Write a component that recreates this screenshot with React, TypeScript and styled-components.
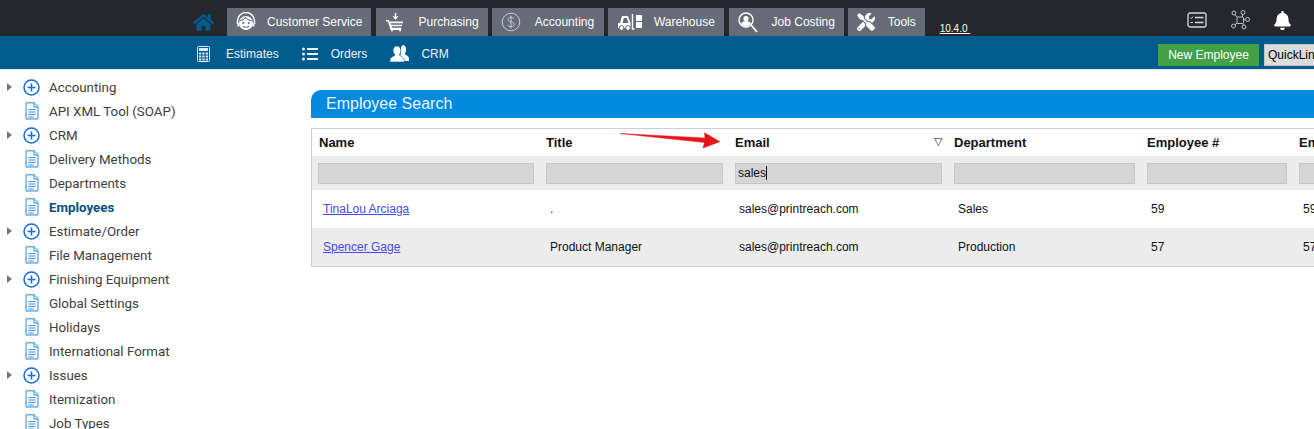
import React from 'react';
import styled, { createGlobalStyle } from 'styled-components';
import { FaHome, FaBell, FaTools, FaListUl } from 'react-icons/fa';

const GlobalStyle = createGlobalStyle`
    html, body {
        margin: 0;
        padding: 0;
        height: 100%;
        overflow: hidden;
        background: #fff;
        font-family: "Liberation Sans", Arial, sans-serif;
    }
`;

const FaceIcon = () => (
    <svg width="20" height="20" viewBox="0 0 20 20" fill="none">
        <path d="M1.500 12V9a8.500 8.500 0 0 1 17 0v3" stroke="#fff" strokeWidth="1.500" />
        <circle cx="10" cy="11" r="7" fill="#fff" />
        <path d="M3.500 9C6 8.500 8 7.500 9.500 5.500c1.500 2 4 3 7 3.500" stroke="#666b78" strokeWidth="1.100" />
        <circle cx="7.200" cy="11" r="1.100" fill="#666b78" />
        <circle cx="12.800" cy="11" r="1.100" fill="#666b78" />
        <path d="M7 14.200c1.600 1.300 4.400 1.300 6 0" stroke="#666b78" strokeWidth="1.200" />
        <path d="M1.500 11.500h1.700v3H1.500ZM16.800 11.500h1.700v3h-1.700Z" fill="#fff" />
    </svg>
);

const CartIcon = () => (
    <svg width="20" height="20" viewBox="0 0 20 20" fill="none">
        <path d="M10.500 1v5M8.300 4.400l2.200 2.400 2.200-2.400" stroke="#fff" strokeWidth="1.400" />
        <path d="M1 8h2.500l1 1.600H18v1.600H5.400l.6 1.600h11v1.400H6.600l.6 1.600h9V18H5.600L3 9.400H1Z" fill="#fff" />
        <circle cx="7" cy="18.600" r="1" fill="#fff" />
        <circle cx="15" cy="18.600" r="1" fill="#fff" />
    </svg>
);

const DollarIcon = () => (
    <svg width="20" height="20" viewBox="0 0 20 20" fill="none" stroke="#c9ccd3" strokeWidth="1">
        <circle cx="10" cy="10" r="8.800" />
        <path d="M13 7c-.6-1.200-1.600-1.700-3-1.700-1.700 0-3 .9-3 2.300 0 3 6.200 1.700 6.200 4.800 0 1.400-1.400 2.300-3.200 2.300-1.500 0-2.700-.6-3.300-1.900M10 3.800v12.400" />
    </svg>
);

const ForkliftIcon = () => (
    <svg width="25" height="17" viewBox="0 0 25 17" fill="none">
        <path d="M1 9h2l2-7h6l2.500 7v5H1Z" fill="#fff" />
        <path d="M5.500 9l1.300-5h3l1.700 5Z" fill="#666b78" />
        <circle cx="4.500" cy="14" r="2.400" fill="#fff" stroke="#666b78" />
        <circle cx="11" cy="14" r="2.400" fill="#fff" stroke="#666b78" />
        <path d="M15.500 0v15h2" stroke="#fff" strokeWidth="1.400" />
        <path d="M19 1h6v6h-6ZM19 8h6v6h-6Z" fill="#fff" />
    </svg>
);

const SearchPersonIcon = () => (
    <svg width="20" height="21" viewBox="0 0 20 21" fill="none">
        <circle cx="8" cy="8" r="7" stroke="#fff" strokeWidth="1.400" />
        <circle cx="8" cy="6.500" r="2.600" fill="#fff" />
        <path d="M3 12c1-2.400 2.800-3 5-3s4 .6 5 3c-1.400 1.600-3 2-5 2s-3.600-.4-5-2Z" fill="#fff" />
        <path d="m13 13 6 7" stroke="#fff" strokeWidth="1.800" />
    </svg>
);

const CalculatorIcon = () => (
    <svg width="13" height="16" viewBox="0 0 13 16" fill="none">
        <rect x=".5" y=".5" width="12" height="15" rx="1" stroke="#dfe9f0" />
        <rect x="2" y="2" width="9" height="3" fill="#dfe9f0" />
        <path d="M2 6.500h2.300v2H2ZM5.300 6.500h2.300v2H5.300ZM8.700 6.500H11v2H8.700ZM2 9.500h2.300v2H2ZM5.300 9.500h2.300v2H5.300ZM8.700 9.500H11v2H8.700ZM2 12.500h2.300v2H2ZM5.300 12.500h2.300v2H5.300ZM8.700 12.500H11v2H8.700Z" fill="#dfe9f0" />
    </svg>
);

const PeopleIcon = () => (
    <svg width="19" height="17" viewBox="0 0 19 17" fill="#fff">
        <path d="M12.500 0c2.300 0 3.600 1.800 3.600 4.200 0 1.800-.5 3.200-1.200 4.200-.2 1.400 4.100 2.300 4.100 5V16h-5.500c-.6-2.400-2.500-3.300-3.700-4.100.6-1.400 1-2.900 1-4.700 0-2.600-.3-4.900 1.700-7.200Z" />
        <path d="M6.800 1c2.500 0 4 1.900 4 4.500 0 1.900-.6 3.300-1.500 4.300.3 1.500 5 2.300 5 4.900V17H0v-2.300c0-2.600 4.700-3.400 5-4.900-1-1-1.900-2.400-1.900-4.300C3.100 2.900 4.400 1 6.800 1Z" stroke="#005b8f" strokeWidth=".6" />
    </svg>
);

const ChecklistIcon = () => (
    <svg width="20" height="16" viewBox="0 0 20 16" fill="none" stroke="#d5d7db">
        <rect x="1" y="1" width="18" height="14" rx="2" strokeWidth="1.300" />
        <path d="M8 5.500h8.500M8 10.500h8.500" strokeWidth="1.300" />
        <path d="M3.500 5.500l1 1 1.500-2M3.500 10.500h2.500" strokeWidth="1" />
    </svg>
);

const NetworkIcon = () => (
    <svg width="20" height="20" viewBox="0 0 20 20" fill="none" stroke="#bfc2c7" strokeWidth="1">
        <rect x="7" y="7" width="6.500" height="6.500" rx="1" />
        <circle cx="4" cy="3" r="2" />
        <circle cx="13" cy="2.500" r="2" />
        <circle cx="17.500" cy="9.500" r="2" />
        <circle cx="14" cy="17" r="2" />
        <circle cx="3.500" cy="16" r="2" />
        <path d="m5 4.700 2.500 2.800M12.800 4.500l-.5 2.500M15.500 9.800h-2M13.600 15l-.8-1.500M5 14.600l2.300-1.500" />
    </svg>
);

const PlusCircle = () => (
    <svg width="17" height="17" viewBox="0 0 17 17" fill="none" stroke="#0f72d8">
        <circle cx="8.500" cy="8.500" r="7.500" strokeWidth="1.500" />
        <path d="M8.500 4.500v8M4.500 8.500h8" strokeWidth="1.600" />
    </svg>
);

const DocIcon = () => (
    <svg width="14" height="18" viewBox="0 0 14 18" fill="none" stroke="#2a8be0">
        <path d="M1 .8h8.200L13 4.600V17H1Z" fill="#f4f9fe" />
        <path d="M9 1v4h4" />
        <path d="M3.500 7.500h7M3.500 10h7M3.500 12.500h7M3.500 15h5" strokeWidth=".9" />
    </svg>
);

const menus = [
    { label: 'Customer Service', icon: <FaceIcon />, width: 144.4, gap: 11 },
    { label: 'Purchasing', icon: <CartIcon />, width: 112, gap: 14 },
    { label: 'Accounting', icon: <DollarIcon />, width: 112, gap: 14 },
    { label: 'Warehouse', icon: <ForkliftIcon />, width: 116.4, gap: 12 },
    { label: 'Job Costing', icon: <SearchPersonIcon />, width: 115, gap: 14 },
    { label: 'Tools', icon: <FaTools size={18} />, width: 77, gap: 13 },
];

const tree = [
    { label: 'Accounting', branch: true },
    { label: 'API XML Tool (SOAP)' },
    { label: 'CRM', branch: true },
    { label: 'Delivery Methods' },
    { label: 'Departments' },
    { label: 'Employees', active: true },
    { label: 'Estimate/Order', branch: true },
    { label: 'File Management' },
    { label: 'Finishing Equipment', branch: true },
    { label: 'Global Settings' },
    { label: 'Holidays' },
    { label: 'International Format' },
    { label: 'Issues', branch: true },
    { label: 'Itemization' },
    { label: 'Job Types' },
];

const employees = [
    { name: 'TinaLou Arciaga', title: '.', email: 'sales@printreach.com', department: 'Sales', number: '59' },
    { name: 'Spencer Gage', title: 'Product Manager', email: 'sales@printreach.com', department: 'Production', number: '57' },
];

const columns = ['Name', 'Title', 'Email', 'Department', 'Employee #', 'Employee ID'];

export default function App() {
    return (
        <Page>
            <GlobalStyle />
            <TopBar>
                <HomeLink><FaHome size={21} /></HomeLink>
                <Tabs>
                    {menus.map(m => (
                        <Tab key={m.label} $width={m.width} $gap={m.gap}>
                            <TabIcon>{m.icon}</TabIcon>
                            {m.label}
                        </Tab>
                    ))}
                </Tabs>
                <Version>10.4.0&nbsp;</Version>
                <TopActions>
                    <ChecklistIcon />
                    <NetworkIcon />
                    <FaBell size={19} />
                </TopActions>
            </TopBar>
            <SubBar>
                <SubNav>
                    <SubLink $gap={16}><CalculatorIcon />Estimates</SubLink>
                    <SubLink $gap={13}><FaListUl size={16} />Orders</SubLink>
                    <SubLink $gap={12}><PeopleIcon />CRM</SubLink>
                </SubNav>
                <SubActions>
                    <NewButton>New Employee</NewButton>
                    <QuickLinks>QuickLinks</QuickLinks>
                </SubActions>
            </SubBar>
            <Body>
                <Sidebar>
                    {tree.map(item => (
                        <TreeRow key={item.label}>
                            <Caret $visible={!!item.branch} />
                            <TreeIcon>{item.branch ? <PlusCircle /> : <DocIcon />}</TreeIcon>
                            <TreeLabel $active={!!item.active}>{item.label}</TreeLabel>
                        </TreeRow>
                    ))}
                </Sidebar>
                <Main>
                    <PanelTitle>Employee Search</PanelTitle>
                    <Table>
                        <HeaderRow>
                            {columns.map(c => (
                                <HeaderCell key={c}>
                                    {c}
                                    {c === 'Email' && <SortMark>▽</SortMark>}
                                </HeaderCell>
                            ))}
                            <Arrow width="102" height="18" viewBox="0 0 102 18">
                                <path d="M0 1.500 85 6 84.500.7 100 9.700 83 16l1.500-5.500Z" fill="#e8141c" stroke="#e8141c" strokeWidth=".5" />
                            </Arrow>
                        </HeaderRow>
                        <FilterRow>
                            {columns.map(c => (
                                <FilterInput key={c}>
                                    {c === 'Email' && <>sales<Caretline /></>}
                                </FilterInput>
                            ))}
                        </FilterRow>
                        {employees.map((e, i) => (
                            <DataRow key={e.name} $striped={i % 2 === 1}>
                                <NameCell><NameLink href="#">{e.name}</NameLink></NameCell>
                                <DataCell>{e.title}</DataCell>
                                <DataCell>{e.email}</DataCell>
                                <DataCell>{e.department}</DataCell>
                                <DataCell>{e.number}</DataCell>
                                <DataCell>{e.number}</DataCell>
                            </DataRow>
                        ))}
                    </Table>
                </Main>
            </Body>
        </Page>
    );
}

const Page = styled.div`
    width: 1314px;
    height: 429px;
    overflow: hidden;
`;
const TopBar = styled.div`
    height: 36px;
    background: #25272c;
    display: flex;
    align-items: flex-end;
    padding-left: 193px;
    box-sizing: border-box;
`;
const HomeLink = styled.a`
    width: 34px;
    height: 24px;
    color: #04598c;
    display: flex;
    align-items: flex-start;
`;
const Tabs = styled.div`
    display: flex;
    gap: 4.200px;
`;
const Tab = styled.div<{ $width: number; $gap: number }>`
    width: ${p => p.$width}px;
    height: 28px;
    box-sizing: border-box;
    background: #666b78;
    color: #fff;
    font-size: 12px;
    display: flex;
    align-items: center;
    padding-left: 9px;
    gap: ${p => p.$gap}px;
    white-space: nowrap;
`;
const TabIcon = styled.span`
    display: flex;
    align-items: center;
    color: #fff;
`;
const Version = styled.a`
    margin-left: 15px;
    margin-bottom: 2px;
    font-size: 10px;
    color: #fff;
    text-decoration: underline;
`;
const TopActions = styled.div`
    margin-left: auto;
    margin-right: 22px;
    margin-top: 4px;
    align-self: center;
    display: flex;
    align-items: center;
    gap: 23px;
    color: #fff;
`;
const SubBar = styled.div`
    height: 33px;
    background: #005b8f;
    border-bottom: 1px solid #d8e8f4;
    display: flex;
    align-items: center;
    padding-left: 197px;
`;
const SubNav = styled.nav`
    display: flex;
    align-items: center;
    gap: 23px;
    padding-top: 2px;
`;
const SubLink = styled.a<{ $gap: number }>`
    display: flex;
    align-items: center;
    gap: ${p => p.$gap}px;
    color: #eef4f8;
    font-size: 12px;
`;
const SubActions = styled.div`
    margin-left: auto;
    margin-top: 4px;
    display: flex;
    align-items: center;
    gap: 5px;
    margin-right: -50px;
`;
const NewButton = styled.button`
    height: 22px;
    width: 101px;
    border: 0;
    padding: 0;
    background: #43a047;
    color: #fff;
    font: 12px "Liberation Sans", Arial, sans-serif;
`;
const QuickLinks = styled.button`
    height: 22px;
    width: 100px;
    border: 1px solid #c4c4c4;
    padding: 0 0 0 3px;
    text-align: left;
    background: #dcdcdc;
    color: #000;
    font: 12px "Liberation Sans", Arial, sans-serif;
`;
const Body = styled.div`
    display: flex;
`;
const Sidebar = styled.aside`
    width: 311px;
    flex: none;
    padding-top: 5px;
    box-sizing: border-box;
`;
const TreeRow = styled.div`
    height: 24px;
    display: flex;
    align-items: center;
`;
const Caret = styled.span<{ $visible: boolean }>`
    width: 0;
    height: 0;
    margin-left: 7px;
    border-style: solid;
    border-width: 4px 0 4px 5px;
    border-color: transparent transparent transparent ${p => (p.$visible ? '#777' : 'transparent')};
`;
const TreeIcon = styled.span`
    width: 17px;
    margin-left: 11px;
    display: flex;
    justify-content: center;
`;
const TreeLabel = styled.span<{ $active: boolean }>`
    margin-left: 9px;
    font-family: Roboto, sans-serif;
    font-size: 13.330px;
    font-weight: ${p => (p.$active ? 700 : 400)};
    color: ${p => (p.$active ? '#0b4f7c' : '#404040')};
`;
const Main = styled.main`
    flex: 1;
    padding-top: 20px;
    min-width: 0;
`;
const PanelTitle = styled.h2`
    margin: 0;
    height: 28px;
    width: 1100px;
    padding-left: 15px;
    box-sizing: border-box;
    background: #008ade;
    border-radius: 10px 0 0 0;
    color: #eaf6fd;
    font-size: 16px;
    font-weight: 400;
    line-height: 27px;
`;
const Table = styled.div`
    margin-top: 10px;
    width: 1100px;
    border: 1px solid #cfcfcf;
    border-width: 1px 0 1px 1px;
    border-radius: 1px;
`;
const gridRow = `
    display: grid;
    grid-template-columns: 216px 177px 207px 181px 140px 200px;
    column-gap: 12px;
    padding-left: 6px;
`;
const HeaderRow = styled.div`
    ${gridRow}
    position: relative;
    height: 27px;
    align-items: center;
`;
const HeaderCell = styled.div`
    position: relative;
    font-size: 13px;
    font-weight: 700;
    color: #111;
    &:first-child {
        padding-left: 1px;
    }
`;
const SortMark = styled.span`
    position: absolute;
    right: 0;
    top: 0;
    font-size: 11px;
    font-weight: 400;
    color: #222;
`;
const Arrow = styled.svg`
    position: absolute;
    left: 308px;
    top: 3px;
`;
const FilterRow = styled.div`
    ${gridRow}
    height: 34px;
    background: #ececec;
    align-items: center;
`;
const FilterInput = styled.div`
    height: 21px;
    box-sizing: border-box;
    background: #d6d6d6;
    border: 1px solid #c6c6c6;
    font-size: 12px;
    line-height: 19px;
    padding-left: 2px;
    color: #111;
    display: flex;
    align-items: center;
`;
const Caretline = styled.i`
    width: 1px;
    height: 14px;
    background: #111;
`;
const DataRow = styled.div<{ $striped: boolean }>`
    ${gridRow}
    height: 38px;
    align-items: center;
    background: ${p => (p.$striped ? '#ececec' : '#fff')};
`;
const DataCell = styled.div`
    font-size: 12px;
    color: #111;
    padding-left: 4px;
`;
const NameCell = styled(DataCell)`
    padding-left: 5px;
`;
const NameLink = styled.a`
    color: #4848f2;
`;
